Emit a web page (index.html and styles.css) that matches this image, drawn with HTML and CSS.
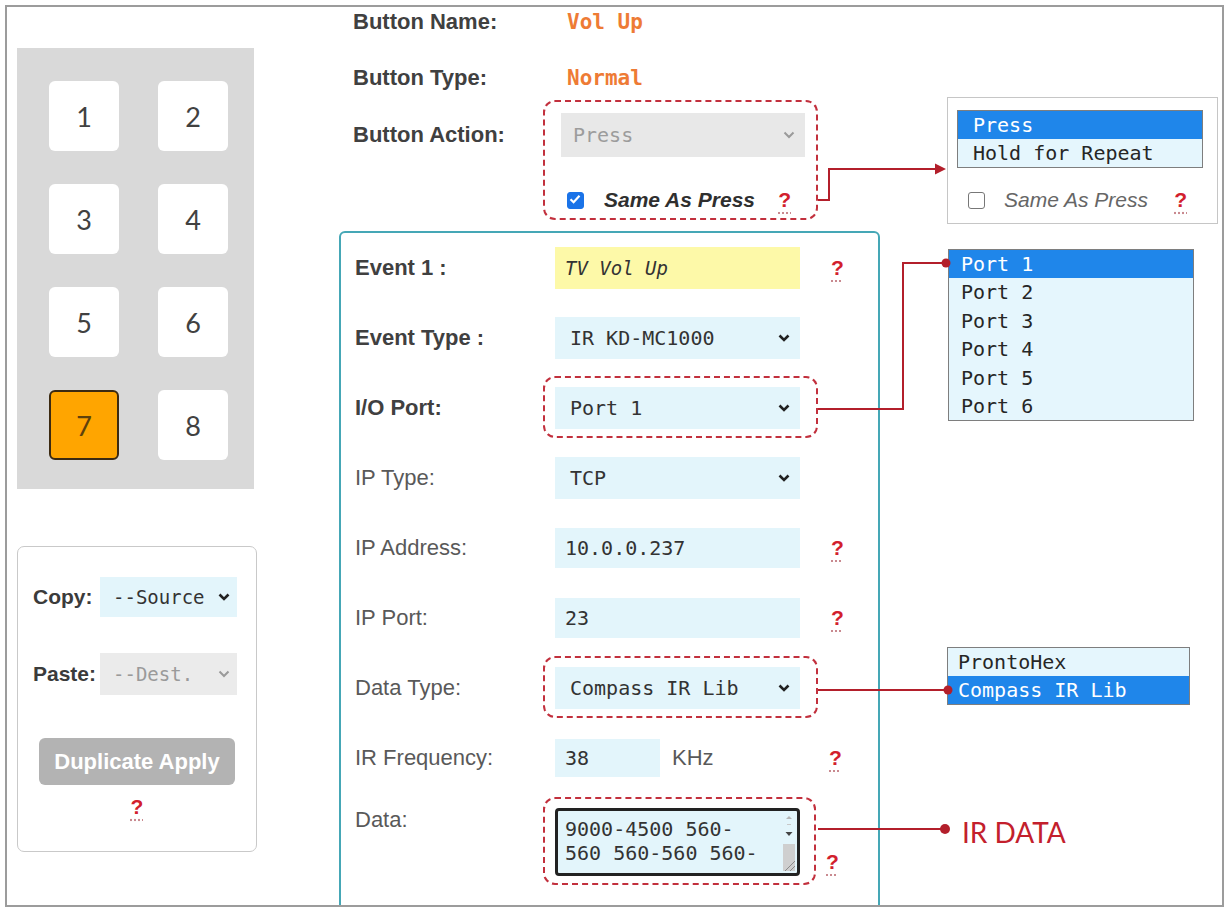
FILE: index.html
```html
<!DOCTYPE html>
<html lang="en">
<head>
  <meta charset="UTF-8" />
  <title>Button Setup - Events</title>
  <link rel="stylesheet" href="styles.css">
</head>
<body>
  <div class="frame">
    <!-- keypad + copy tools -->
    <aside class="side">
      <div class="keypad">
        <div class="key">1</div>
        <div class="key">2</div>
        <div class="key">3</div>
        <div class="key">4</div>
        <div class="key">5</div>
        <div class="key">6</div>
        <div class="key active">7</div>
        <div class="key">8</div>
      </div>

      <div class="copy-panel">
        <div class="copy-row">
          <span class="copy-label">Copy:</span>
          <div class="mini-select">--Source
            <svg class="chev" width="12" height="8" viewBox="0 0 12 8"><path d="M1.5 1.5 6 6 10.5 1.5"/></svg>
          </div>
        </div>
        <div class="copy-row paste">
          <span class="copy-label">Paste:</span>
          <div class="mini-select off">--Dest.
            <svg class="chev" width="12" height="8" viewBox="0 0 12 8"><path d="M1.5 1.5 6 6 10.5 1.5"/></svg>
          </div>
        </div>
        <div class="dup-btn">Duplicate Apply</div>
        <div class="dup-help"><span class="help">?</span></div>
      </div>
    </aside>

    <!-- button details and event form -->
    <main class="main">
      <div class="head-row">
        <span class="head-label">Button Name:</span>
        <span class="head-value">Vol Up</span>
      </div>
      <div class="head-row">
        <span class="head-label">Button Type:</span>
        <span class="head-value">Normal</span>
      </div>
      <div class="action-row">
        <span class="head-label">Button Action:</span>
        <div class="action-box">
          <div class="select disabled">Press
            <svg class="chev" width="12" height="8" viewBox="0 0 12 8"><path d="M1.5 1.5 6 6 10.5 1.5"/></svg>
          </div>
          <div class="check-row">
            <span class="check on">
              <svg width="16" height="16" viewBox="0 0 16 16"><path d="M3.5 8.2 6.6 11.2 12.5 4.8"/></svg>
            </span>
            <span class="check-label">Same As Press</span>
            <span class="help">?</span>
          </div>
        </div>
      </div>

      <section class="events">
        <div class="ev-row">
          <span class="ev-label strong">Event 1 :</span>
          <div class="field note">TV Vol Up</div>
          <span class="help-cell"><span class="help">?</span></span>
        </div>
        <div class="ev-row">
          <span class="ev-label strong">Event Type :</span>
          <div class="field select">IR KD-MC1000
            <svg class="chev" width="12" height="8" viewBox="0 0 12 8"><path d="M1.5 1.5 6 6 10.5 1.5"/></svg>
          </div>
        </div>
        <div class="ev-row">
          <span class="ev-label strong">I/O Port:</span>
          <div class="field select hl">Port 1
            <svg class="chev" width="12" height="8" viewBox="0 0 12 8"><path d="M1.5 1.5 6 6 10.5 1.5"/></svg>
          </div>
        </div>
        <div class="ev-row">
          <span class="ev-label">IP Type:</span>
          <div class="field select">TCP
            <svg class="chev" width="12" height="8" viewBox="0 0 12 8"><path d="M1.5 1.5 6 6 10.5 1.5"/></svg>
          </div>
        </div>
        <div class="ev-row">
          <span class="ev-label">IP Address:</span>
          <div class="field text">10.0.0.237</div>
          <span class="help-cell"><span class="help">?</span></span>
        </div>
        <div class="ev-row">
          <span class="ev-label">IP Port:</span>
          <div class="field text">23</div>
          <span class="help-cell"><span class="help">?</span></span>
        </div>
        <div class="ev-row">
          <span class="ev-label">Data Type:</span>
          <div class="field select hl">Compass IR Lib
            <svg class="chev" width="12" height="8" viewBox="0 0 12 8"><path d="M1.5 1.5 6 6 10.5 1.5"/></svg>
          </div>
        </div>
        <div class="ev-row">
          <span class="ev-label">IR Frequency:</span>
          <div class="freq">
            <div class="field text short">38</div>
            <span class="unit">KHz</span>
          </div>
          <span class="help-cell freq-help"><span class="help">?</span></span>
        </div>
        <div class="ev-row data">
          <span class="ev-label">Data:</span>
          <div class="area hl">
            9000-4500 560-<br>560 560-560 560-
            <svg class="scroll" width="16" height="62" viewBox="0 0 16 62">
              <path d="M5 8 8 5 11 8Z" fill="#b5b5b5"/>
              <rect x="6" y="13" width="4" height="1" fill="#c8c8c8"/>
              <path d="M4.5 21 8 25 11.5 21Z" fill="#444"/>
              <rect x="2" y="33" width="12" height="27" fill="#cfcfcf"/>
              <path d="M14 50 4 60M14 55 9 60" stroke="#8a8a8a" stroke-width="1"/>
            </svg>
          </div>
          <span class="help-cell data-help"><span class="help">?</span></span>
        </div>
      </section>
    </main>

    <!-- option lists shown open -->
    <aside class="notes">
      <div class="callout">
        <div class="list action-list">
          <div class="list-item on">Press</div>
          <div class="list-item">Hold for Repeat</div>
        </div>
        <div class="check-row plain">
          <span class="check"></span>
          <span class="check-label">Same As Press</span>
          <span class="help">?</span>
        </div>
      </div>

      <div class="list port-list">
        <div class="list-item on">Port 1</div>
        <div class="list-item">Port 2</div>
        <div class="list-item">Port 3</div>
        <div class="list-item">Port 4</div>
        <div class="list-item">Port 5</div>
        <div class="list-item">Port 6</div>
      </div>

      <div class="list type-list">
        <div class="list-item">ProntoHex</div>
        <div class="list-item on">Compass IR Lib</div>
      </div>

      <div class="ir-note">IR DATA</div>
    </aside>

    <!-- connector lines between fields and lists -->
    <svg class="links" width="1215" height="898">
      <g transform="translate(-7 -7)" stroke="#b31f2b" stroke-width="2" fill="none">
        <path d="M818 200H829V169H938"/>
        <path d="M818 409H903V263H946"/>
        <path d="M818 690H947"/>
        <path d="M818 829H944"/>
      </g>
      <g transform="translate(-7 -7)" fill="#b31f2b">
        <path d="M946 169 935 163.5V174.5Z"/>
        <circle cx="946" cy="263" r="4.5"/>
        <circle cx="948" cy="690" r="4.5"/>
        <circle cx="945" cy="829" r="5"/>
      </g>
    </svg>
  </div>
</body>
</html>
```

FILE: styles.css
```css
* {
  box-sizing: border-box;
  margin: 0;
  padding: 0;
}

body {
  background: #fff;
  padding: 5px;
  font-family: "Liberation Sans", Arial, sans-serif;
  color: #3b3b3b;
}

.frame {
  position: relative;
  display: flex;
  width: 1219px;
  height: 902px;
  padding-left: 10px;
  border: 2px solid #9c9c9c;
  overflow: hidden;
}

/* ---- left column ---- */

.side {
  width: 240px;
  flex-shrink: 0;
  padding-top: 41px;
}

.keypad {
  display: grid;
  grid-template-columns: 70px 70px;
  grid-auto-rows: 70px;
  column-gap: 39px;
  row-gap: 33px;
  align-content: start;
  width: 237px;
  height: 441px;
  padding: 33px 0 0 32px;
  background: #d9d9d9;
}

.key {
  display: flex;
  align-items: center;
  justify-content: center;
  background: #fff;
  border-radius: 6px;
  font-family: Lato, "Open Sans", sans-serif;
  font-size: 27px;
  color: #414141;
}

.key.active {
  background: #ffa500;
  border: 2px solid #3b2a12;
  color: #5e410c;
}

.copy-panel {
  width: 240px;
  height: 306px;
  margin-top: 57px;
  padding: 30px 0 0 15px;
  border: 1.5px solid #c9c9c9;
  border-radius: 7px;
}

.copy-row {
  display: flex;
  align-items: center;
  height: 40px;
}

.copy-row.paste {
  height: 42px;
  margin-top: 36px;
}

.copy-label {
  width: 67px;
  font-size: 21px;
  font-weight: bold;
  color: #3b3b3b;
}

.mini-select {
  display: flex;
  align-items: center;
  justify-content: space-between;
  width: 137px;
  height: 100%;
  padding: 0 7px 0 13px;
  background: #e3f5fb;
  font-family: "DejaVu Sans Mono", monospace;
  font-size: 19px;
  color: #333;
}

.mini-select.off {
  background: #ebebeb;
  color: #9a9a9a;
}

.dup-btn {
  display: flex;
  align-items: center;
  justify-content: center;
  width: 196px;
  height: 47px;
  margin: 43px 0 0 6px;
  background: #b3b3b3;
  border-radius: 6px;
  color: #fff;
  font-size: 22px;
  font-weight: bold;
}

.dup-help {
  width: 196px;
  margin: 10px 0 0 6px;
  text-align: center;
}

/* ---- shared bits ---- */

.chev {
  flex-shrink: 0;
}

.chev path {
  fill: none;
  stroke: #222;
  stroke-width: 2.6;
}

.mini-select.off .chev path,
.select.disabled .chev path {
  stroke: #9a9a9a;
  stroke-width: 2;
}

.help {
  color: #d2202c;
  font-size: 21px;
  font-weight: bold;
  text-decoration: underline dotted #c98a90;
  text-underline-offset: 5px;
}

.check {
  display: inline-flex;
  width: 17px;
  height: 17px;
  border: 1.5px solid #777;
  border-radius: 3px;
  background: #fff;
}

.check.on {
  background: #1a73e8;
  border-color: #1a73e8;
}

.check.on svg {
  margin: -1.5px;
}

.check.on path {
  fill: none;
  stroke: #fff;
  stroke-width: 2.2;
}

/* ---- middle column ---- */

.main {
  width: 541px;
  flex-shrink: 0;
  margin-left: 82px;
}

.head-row {
  display: flex;
  align-items: center;
  height: 30px;
  padding-left: 14px;
}

.head-row + .head-row {
  margin-top: 26px;
}

.head-label {
  width: 208px;
  font-size: 22px;
  font-weight: bold;
  color: #404040;
}

.head-value {
  padding-left: 6px;
  font-family: "DejaVu Sans Mono", monospace;
  font-size: 21px;
  font-weight: bold;
  color: #ee7b35;
}

.action-row {
  display: flex;
  align-items: flex-start;
  margin-top: 7px;
  padding-left: 14px;
}

.action-row .head-label {
  margin-top: 13px;
  line-height: 44px;
}

.action-box {
  width: 275px;
  margin-left: -18px;
  padding: 11px 11px 4px 16px;
  border: 2px dashed #c2303d;
  border-radius: 12px;
}

.select {
  display: flex;
  align-items: center;
  justify-content: space-between;
  height: 44px;
  padding: 0 10px 0 12px;
  font-family: "DejaVu Sans Mono", monospace;
  font-size: 20px;
}

.select.disabled {
  background: #e8e8e8;
  color: #9c9c9c;
}

.check-row {
  display: flex;
  align-items: center;
  height: 28px;
  margin-top: 29px;
  padding-left: 6px;
}

.check-label {
  margin-left: 20px;
  font-size: 21px;
  font-style: italic;
  font-weight: bold;
  color: #2f2f2f;
}

.check-row .help {
  margin-left: auto;
  margin-right: 14px;
}

.events {
  height: 720px;
  margin-top: 11px;
  border: 2px solid #45a7b6;
  border-radius: 6px;
}

.ev-row {
  display: grid;
  grid-template-columns: 200px 245px auto;
  align-items: center;
  height: 70px;
  padding-left: 14px;
}

.ev-label {
  font-size: 22px;
  color: #595959;
}

.ev-label.strong {
  font-weight: bold;
  color: #404040;
}

.field {
  display: flex;
  align-items: center;
  height: 40px;
  padding-left: 10px;
  background: #e3f5fb;
  font-family: "DejaVu Sans Mono", monospace;
  font-size: 20px;
  color: #333;
}

.field.note {
  height: 42px;
  background: #fdf9a8;
  font-style: italic;
  font-size: 19px;
}

.field.select {
  height: 42px;
  padding: 0 10px 0 15px;
  justify-content: space-between;
}

.hl {
  position: relative;
}

.hl::before {
  content: "";
  position: absolute;
  inset: -11px -18px -9px -12px;
  border: 2px dashed #c2303d;
  border-radius: 12px;
}

.help-cell {
  padding-left: 31px;
}

.freq {
  display: flex;
  align-items: center;
}

.field.short {
  width: 105px;
  height: 38px;
}

.unit {
  margin-left: 12px;
  font-size: 22px;
  color: #595959;
}

.freq-help {
  padding-left: 29px;
}

.ev-row.data {
  align-items: start;
  height: auto;
  padding-top: 15px;
}

.ev-row.data .ev-label {
  line-height: 24px;
}

.area {
  height: 68px;
  padding: 6px 0 0 7px;
  border: 3px solid #222;
  border-radius: 4px;
  background: #e3f5fb;
  font-family: "DejaVu Sans Mono", monospace;
  font-size: 20px;
  line-height: 24px;
  color: #333;
}

.area::before {
  inset: -14px -19px -12px -15px;
}

.scroll {
  position: absolute;
  top: 0;
  right: 0;
}

.data-help {
  margin-top: 42px;
  padding-left: 26px;
}

/* ---- right column ---- */

.notes {
  width: 272px;
  flex-shrink: 0;
  margin-left: 67px;
  padding-top: 90px;
}

.callout {
  width: 271px;
  height: 127px;
  padding: 12px 0 0 9px;
  border: 1px solid #c6c6c6;
}

.list {
  border: 1.5px solid #7e7e7e;
  font-family: "DejaVu Sans Mono", monospace;
  font-size: 20px;
  color: #262626;
}

.list-item {
  height: 28px;
  line-height: 28px;
  padding-left: 12px;
  background: #e5f6fd;
}

.list-item.on {
  background: #1f86ea;
  color: #fff;
}

.action-list {
  width: 246px;
}

.action-list .list-item {
  padding-left: 15px;
}

.check-row.plain {
  height: 22px;
  margin-top: 21px;
  padding-left: 11px;
}

.check-row.plain .check-label {
  margin-left: 19px;
  font-weight: normal;
  color: #666;
}

.check-row.plain .help {
  margin-right: 30px;
}

.port-list {
  width: 246px;
  margin: 25px 0 0 1px;
}

.port-list .list-item {
  height: 28.4px;
  line-height: 28.4px;
}

.type-list {
  width: 243px;
  margin-top: 226px;
}

.type-list .list-item {
  padding-left: 10px;
}

.ir-note {
  margin: 112px 0 0 15px;
  font-family: Lato, "Open Sans", sans-serif;
  font-size: 28px;
  line-height: 30px;
  color: #c3202c;
}

.links {
  position: absolute;
  top: 0;
  left: 0;
  pointer-events: none;
}
```
